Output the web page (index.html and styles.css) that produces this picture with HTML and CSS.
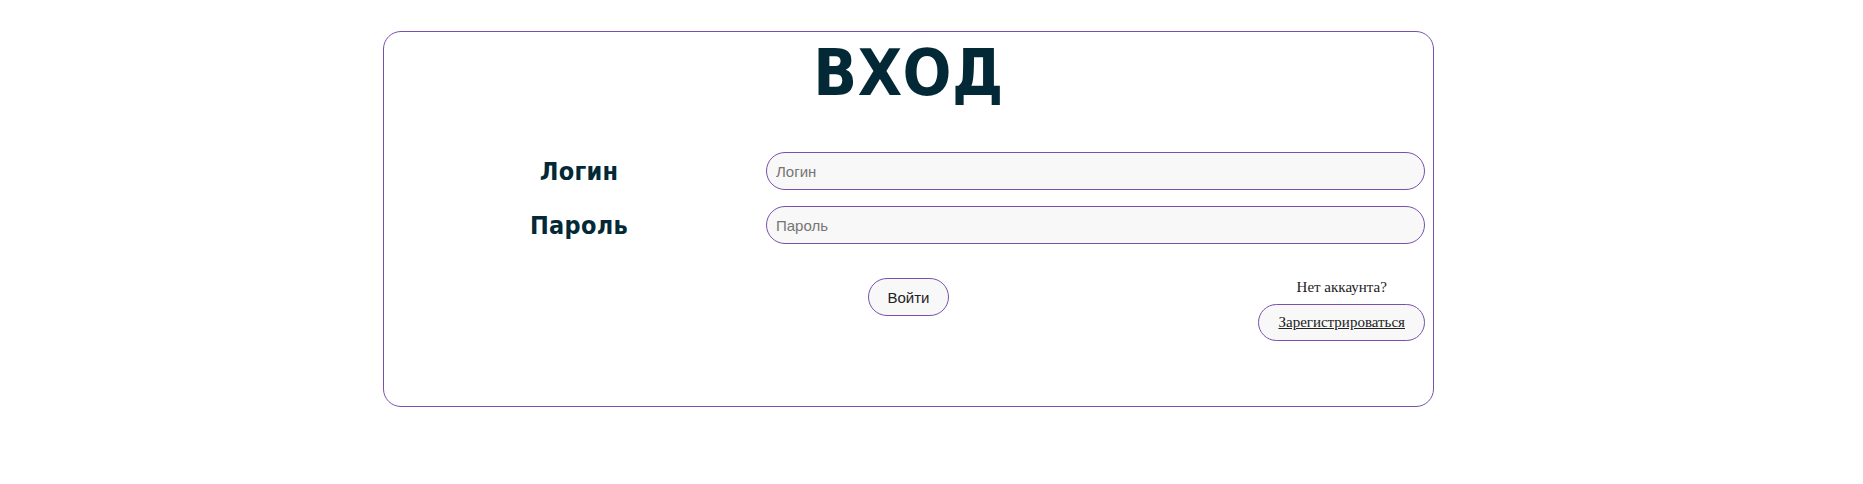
FILE: index.html
```html
<!DOCTYPE html>
<html lang="ru">
<head>
<meta charset="utf-8">
<title>Вход</title>
<link rel="stylesheet" href="styles.css">
</head>
<body>
<main class="card">
  <h1 class="title">ВХОД</h1>
  <form class="form">
    <div class="fields">
      <label class="label" for="login">Логин</label>
      <input class="input" id="login" type="text" placeholder="Логин">
      <label class="label" for="password">Пароль</label>
      <input class="input" id="password" type="password" placeholder="Пароль">
    </div>
    <div class="actions">
      <div class="spacer"></div>
      <button class="btn btn-login" type="button">Войти</button>
      <div class="register">
        <p class="register-text">Нет аккаунта?</p>
        <button class="btn btn-register" type="button"><a class="register-link" href="#">Зарегистрироваться</a></button>
      </div>
    </div>
  </form>
</main>
</body>
</html>
```

FILE: styles.css
```css
html, body {
  margin: 0;
  padding: 0;
  background: #ffffff;
}

body {
  padding-top: 31px;
  font-family: "Liberation Serif", "Times New Roman", serif;
}

.card {
  box-sizing: border-box;
  width: 1051px;
  margin-left: 383px;
  border: 1px solid #7a50ad;
  border-radius: 18px;
  padding: 4px 8px 65px;
}

.title {
  margin: 0;
  text-align: center;
  font-family: "DejaVu Sans Condensed", "DejaVu Sans", sans-serif;
  font-weight: bold;
  font-size: 64px;
  line-height: 74px;
  letter-spacing: 0.5px;
  color: #032936;
}

.form {
  margin: 42px 0 0;
}

.fields {
  display: grid;
  grid-template-columns: 374px 1fr;
  row-gap: 16px;
  align-items: center;
}

.label {
  text-align: center;
  font-family: "DejaVu Sans Condensed", "DejaVu Sans", sans-serif;
  font-weight: bold;
  font-size: 25px;
  letter-spacing: 0.3px;
  color: #032936;
}

.input {
  box-sizing: border-box;
  height: 38px;
  width: 100%;
  margin: 0;
  padding: 0 9px;
  border: 1px solid #7a50ad;
  border-radius: 19px;
  background: #f8f8f8;
  font-family: "Liberation Sans", Arial, sans-serif;
  font-size: 15px;
  color: #222;
  outline: none;
}

.input::placeholder {
  color: #757575;
}

.actions {
  display: grid;
  grid-template-columns: 1fr auto 1fr;
  align-items: start;
  margin-top: 34px;
}

.btn {
  box-sizing: border-box;
  margin: 0;
  border: 1px solid #7a50ad;
  background: #f8f8f8;
  cursor: pointer;
}

.btn-login {
  height: 38px;
  padding: 0 19px;
  border-radius: 19px;
  font-family: "Liberation Sans", Arial, sans-serif;
  font-size: 15px;
  color: #222;
}

.register {
  justify-self: end;
  display: flex;
  flex-direction: column;
  align-items: center;
}

.register-text {
  margin: 0 0 8px;
  font-size: 15px;
  line-height: 18px;
  color: #222;
}

.btn-register {
  height: 37px;
  padding: 0 19px;
  border-radius: 19px;
  font-family: "Liberation Serif", "Times New Roman", serif;
  font-size: 15px;
}

.register-link {
  color: #222;
  text-decoration: underline;
}
```
